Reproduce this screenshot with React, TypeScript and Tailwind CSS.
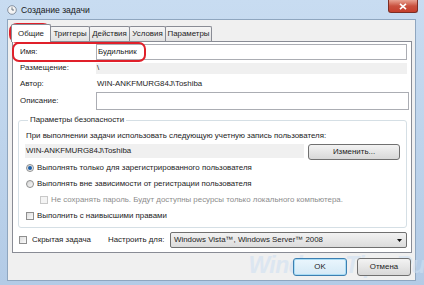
import React from "react";

function Radio({ checked }: { checked?: boolean }) {
  return (
    <span className="w-[8px] h-[8px] rounded-full border border-[#8e8f8f] bg-gradient-to-br from-[#d4d4d4] to-[#fafafa] flex items-center justify-center shrink-0">
      {checked && <span className="w-[4px] h-[4px] rounded-full bg-[#1b5ea8]" />}
    </span>
  );
}

function Check({ disabled }: { disabled?: boolean }) {
  return (
    <span
      className={`w-[8px] h-[8px] border shrink-0 ${
        disabled ? "border-[#c9c9c9] bg-[#f4f4f4]" : "border-[#8f8f8f] bg-gradient-to-br from-[#dedede] to-[#fbfbfb]"
      }`}
    />
  );
}

const tabs = [
  { t: "Триггеры", w: "w-[40px]" },
  { t: "Действия", w: "w-[41px]" },
  { t: "Условия", w: "w-[37px]" },
  { t: "Параметры", w: "w-[47px]" },
];

export default function App() {
  return (
    <div
      className="relative w-[424px] h-[285px] overflow-hidden bg-gradient-to-b from-[#c8dcf1] to-[#b3cbe6] text-[7.9px] text-[#1c1c1c] leading-[10px]"
      style={{ fontFamily: '"Liberation Sans", Arial, sans-serif' }}
    >
      {/* title bar */}
      <div className="h-[19px] flex items-center pl-[7px]">
        <svg width="10" height="10" viewBox="0 0 10 10">
          <circle cx="5" cy="5" r="4.3" fill="#f4f4f4" stroke="#7a8796" strokeWidth="0.9" />
          <path d="M5 2.4V5h2" stroke="#4a5868" strokeWidth="0.8" fill="none" />
        </svg>
        <span className="ml-[4px] text-[8.6px] text-[#1a1a1a]">Создание задачи</span>
      </div>
      <div className="absolute top-0 right-[6px] w-[30px] h-[13px] rounded-b-[3px] border border-t-0 border-[#7c2d24] bg-gradient-to-b from-[#e8a292] via-[#c9513f] to-[#c53e2b] flex items-center justify-center">
        <svg width="8" height="7" viewBox="0 0 8 7">
          <path d="M1 0.8L7 6.2M7 0.8L1 6.2" stroke="#fff" strokeWidth="1.6" />
        </svg>
      </div>

      {/* client */}
      <div className="ml-[7px] mr-[8px] h-[262px] bg-[#f0f0f0] border border-[#8fa6bf] pt-[4px] pl-[3px] pr-[4px]">
        <div className="relative z-10 h-[17px] flex items-end">
          <div className="w-[40px] h-[18px] -mb-px bg-white border border-b-0 border-[#898c95] rounded-t-[2px] flex items-center justify-center">
            Общие
          </div>
          {tabs.map((x) => (
            <div
              key={x.t}
              className={`${x.w} h-[15px] -ml-px bg-gradient-to-b from-[#f6f6f6] to-[#e1e1e1] border border-b-0 border-[#898c95] rounded-t-[2px] flex items-center justify-center`}
            >
              {x.t}
            </div>
          ))}
        </div>

        <div className="ml-[1px] w-[400px] h-[212px] bg-white border border-[#898c95]">
          <div className="pl-[7px] pt-[2px]">
            <div className="h-[16px] flex items-center">
              <span className="w-[76px]">Имя:</span>
              <div className="w-[311px] h-[16px] border border-[#abadb3] flex items-center pl-[1px]">Будильник</div>
            </div>
            <div className="h-[16px] flex items-center">
              <span className="w-[76px]">Размещение:</span>
              <div className="w-[311px] h-[11px] bg-[#f0f0f0] flex items-center pl-[1px]">\</div>
            </div>
            <div className="h-[16px] flex items-center">
              <span className="w-[76px]">Автор:</span>
              <span className="pl-[1px]">WIN-ANKFMURG84J\Toshiba</span>
            </div>
            <div className="h-[18px] flex items-center">
              <span className="w-[76px]">Описание:</span>
              <div className="w-[313px] h-[18px] border border-[#abadb3]" />
            </div>
          </div>

          <fieldset className="ml-[5px] mt-[5px] w-[389px] h-[113px] border border-[#d5dfe5] rounded-[3px] pl-[6px]">
            <legend className="ml-[3px] px-[2px]">Параметры безопасности</legend>
            <div className="pt-[6px] pl-[1px]">При выполнении задачи использовать следующую учетную запись пользователя:</div>
            <div className="mt-[3px] flex items-start">
              <div className="w-[279px] h-[14px] bg-[#f0f0f0] flex items-center pl-[1px]">WIN-ANKFMURG84J\Toshiba</div>
              <div className="ml-[4px] w-[92px] h-[16px] rounded-[3px] border border-[#707070] bg-gradient-to-b from-[#f3f3f3] to-[#d8d8d8] flex items-center justify-center">
                Изменить...
              </div>
            </div>
            <div className="h-[16px] flex items-center pl-[1px] gap-[3px]">
              <Radio checked />
              <span>Выполнять только для зарегистрированного пользователя</span>
            </div>
            <div className="h-[16px] flex items-center pl-[1px] gap-[3px]">
              <Radio />
              <span>Выполнять вне зависимости от регистрации пользователя</span>
            </div>
            <div className="h-[16px] flex items-center pl-[15px] gap-[3px] text-[#8d8d8d]">
              <Check disabled />
              <span>Не сохранять пароль. Будут доступны ресурсы только локального компьютера.</span>
            </div>
            <div className="h-[16px] flex items-center pl-[1px] gap-[3px]">
              <Check />
              <span>Выполнить с наивысшими правами</span>
            </div>
          </fieldset>

          <div className="mt-[4px] pl-[6px] h-[16px] flex items-center">
            <div className="w-[89px] flex items-center gap-[5px]">
              <Check />
              <span>Скрытая задача</span>
            </div>
            <span className="w-[62px]">Настроить для:</span>
            <div className="w-[237px] h-[16px] rounded-[2px] border border-[#707070] bg-gradient-to-b from-[#f2f2f2] to-[#dcdcdc] flex items-center pl-[3px] pr-[4px] justify-between">
              <span>Windows Vista™, Windows Server™ 2008</span>
              <svg width="5" height="3" viewBox="0 0 5 3">
                <path d="M0 0h5L2.5 3z" fill="#111" />
              </svg>
            </div>
          </div>
        </div>

        <div className="relative mt-[5px] flex justify-end gap-[10px]">
          <span className="absolute right-[-14px] top-[-7px] text-[23px] leading-[28px] font-bold italic text-[#cfe0f2] opacity-60 tracking-tight">
            WindowsTips.Ru
          </span>
          <div className="relative w-[54px] h-[18px] rounded-[3px] border border-[#3c7fb1] shadow-[inset_0_0_0_1px_#a8dcf5] bg-gradient-to-b from-[#eaf6fd] to-[#d4e9f6] flex items-center justify-center">
            OK
          </div>
          <div className="relative w-[54px] h-[18px] rounded-[3px] border border-[#707070] bg-gradient-to-b from-[#f3f3f3] to-[#d8d8d8] flex items-center justify-center">
            Отмена
          </div>
        </div>
      </div>

      {/* red annotations */}
      <div className="absolute left-[9px] top-[23px] w-[42px] h-[20px] rounded-[8px] border-2 border-[#e0202a]" />
      <div className="absolute left-[12px] top-[42px] w-[134px] h-[20px] rounded-[7px] border-2 border-[#e0202a]" />
    </div>
  );
}
